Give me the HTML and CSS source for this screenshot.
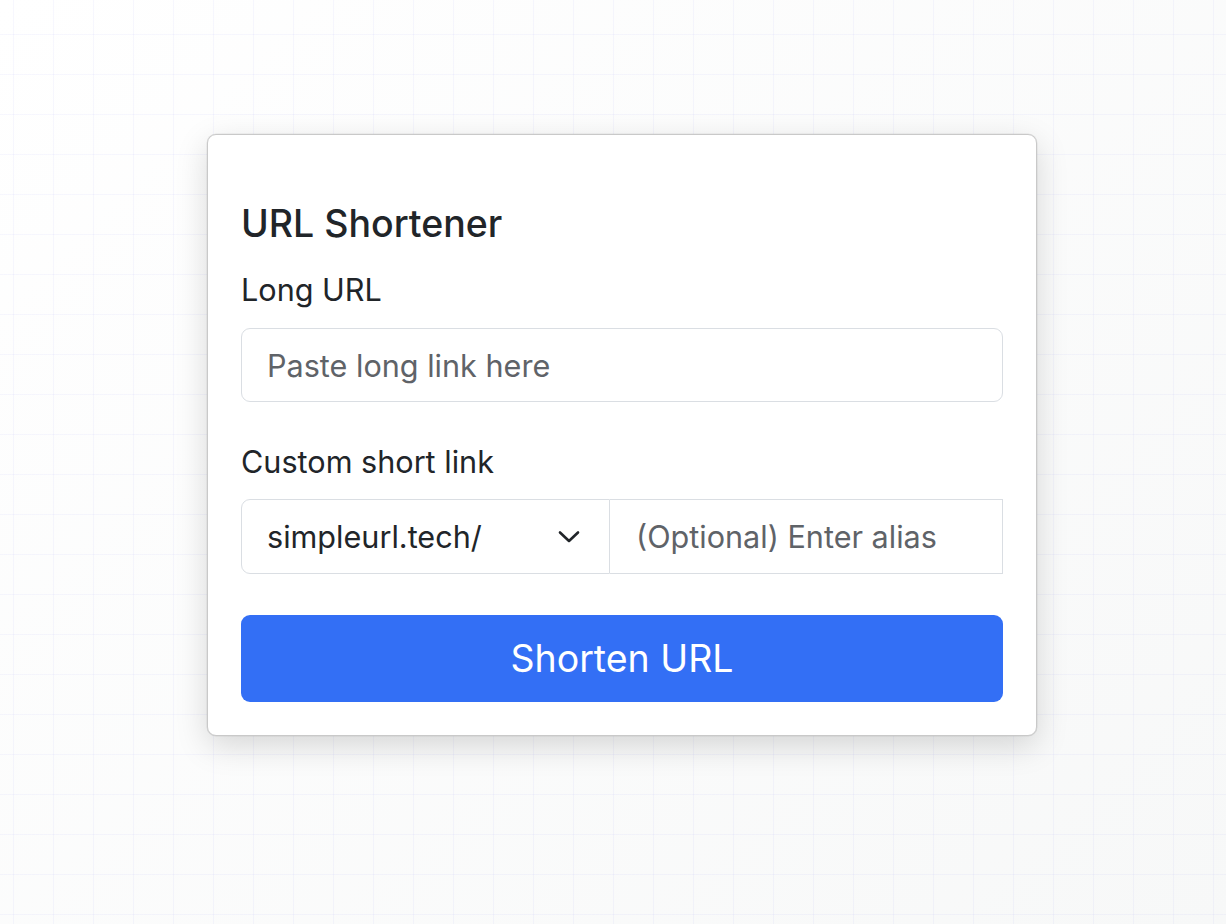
FILE: index.html
```html
<!DOCTYPE html>
<html lang="en">
<head>
<meta charset="utf-8">
<title>URL Shortener</title>
<link rel="stylesheet" href="styles.css">
</head>
<body>
<div class="page">
  <div class="card">
    <h3 class="title">URL Shortener</h3>
    <label class="label">Long URL</label>
    <div class="field">
      <input class="input" type="text" placeholder="Paste long link here">
    </div>
    <label class="label label-second">Custom short link</label>
    <div class="group">
      <div class="select">
        <span>simpleurl.tech/</span>
        <svg class="chev" width="24" height="14" viewBox="0 0 24 14"><polyline points="3,2.5 12,11 21,2.5" fill="none" stroke="#212529" stroke-width="2.6" stroke-linecap="round" stroke-linejoin="round"/></svg>
      </div>
      <input class="alias" type="text" placeholder="(Optional) Enter alias">
    </div>
    <button class="btn">Shorten URL</button>
  </div>
</div>
</body>
</html>
```

FILE: styles.css
```css
html, body {
  margin: 0;
  padding: 0;
}
body {
  width: 1226px;
  height: 924px;
  overflow: hidden;
  font-family: Inter, "Liberation Sans", sans-serif;
  color: #212529;
  background-color: #fafbfb;
  background-image:
    linear-gradient(to right, rgba(100, 100, 240, 0.05) 1px, transparent 1px),
    linear-gradient(to bottom, rgba(100, 100, 240, 0.05) 1px, transparent 1px),
    linear-gradient(135deg, #ffffff 0%, #f7f8f8 100%);
  background-size: 40px 40px, 40px 40px, 100% 100%;
  background-position: 13px 0, 0 34px, 0 0;
}
.page {
  padding-top: 134px;
  padding-left: 207px;
}
.card {
  width: 762px;
  background: #fff;
  border: 1px solid #c9c9c9;
  border-radius: 9px;
  padding: 67px 33px 33px 33px;
  box-shadow: 0 0 0 0.5px rgba(0, 0, 0, 0.08), 0 10px 32px rgba(0, 0, 0, 0.15);
}
.title {
  margin: 0 0 22px 0;
  font-size: 37.5px;
  font-weight: 500;
  line-height: 43px;
}
.label {
  display: block;
  font-size: 30.6px;
  line-height: 45px;
  margin-bottom: 16px;
}
.label-second {
  margin-top: 37px;
  margin-bottom: 15px;
}
.field {
  display: flex;
}
.input, .alias {
  font-family: Inter, "Liberation Sans", sans-serif;
  font-size: 30.6px;
  color: #212529;
  outline: none;
  box-sizing: border-box;
  margin: 0;
}
.input {
  width: 100%;
  height: 74px;
  border: 1px solid #dadee3;
  border-radius: 9px;
  padding: 0 25px;
}
.input::placeholder, .alias::placeholder {
  color: #5f6368;
  opacity: 1;
}
.group {
  display: flex;
  height: 75px;
}
.select {
  box-sizing: border-box;
  width: 369px;
  height: 75px;
  border: 1px solid #dadee3;
  border-radius: 9px 0 0 9px;
  padding: 0 28px 0 25px;
  display: flex;
  align-items: center;
  justify-content: space-between;
  font-size: 30.6px;
}
.chev {
  display: block;
}
.alias {
  flex: 1;
  min-width: 0;
  height: 75px;
  border: 1px solid #dadee3;
  border-left: none;
  border-radius: 0;
  padding: 0 26px;
}
.btn {
  display: block;
  width: 100%;
  height: 87px;
  margin-top: 41px;
  border: none;
  border-radius: 9px;
  background: #336ff5;
  color: #fff;
  font-family: Inter, "Liberation Sans", sans-serif;
  font-size: 37.5px;
  cursor: pointer;
}
```
